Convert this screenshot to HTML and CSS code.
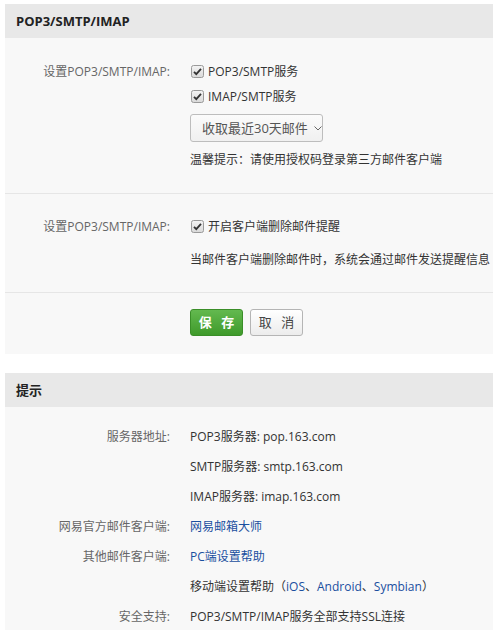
FILE: index.html
```html
<!DOCTYPE html>
<html lang="zh-CN">
<head>
<meta charset="utf-8">
<title>POP3/SMTP/IMAP</title>
<link rel="stylesheet" href="styles.css">
</head>
<body>
<div class="panel">
  <div class="panel-hd">POP3/SMTP/IMAP</div>
  <div class="section s1">
    <div class="row">
      <div class="label">设置POP3/SMTP/IMAP:</div>
      <div class="content">
        <div class="line"><span class="cb"><svg viewBox="0 0 13 13" width="13" height="13"><rect x="0.5" y="0.5" width="12" height="12" rx="2" fill="url(#g)" stroke="#9a9a9a"/><defs><linearGradient id="g" x1="0" y1="0" x2="0" y2="1"><stop offset="0" stop-color="#f4f4f4"/><stop offset="1" stop-color="#d9d9d9"/></linearGradient></defs><path d="M3 6.8 L5.3 9.2 L10 3.8" fill="none" stroke="#333" stroke-width="1.8"/></svg></span>POP3/SMTP服务</div>
        <div class="line"><span class="cb"><svg viewBox="0 0 13 13" width="13" height="13"><rect x="0.5" y="0.5" width="12" height="12" rx="2" fill="url(#g)" stroke="#9a9a9a"/><path d="M3 6.8 L5.3 9.2 L10 3.8" fill="none" stroke="#333" stroke-width="1.8"/></svg></span>IMAP/SMTP服务</div>
        <div class="select">收取最近30天邮件<svg class="chev" viewBox="0 0 8 5" width="8" height="5"><path d="M0.5 0.5 L4 4 L7.5 0.5" fill="none" stroke="#666" stroke-width="1"/></svg></div>
        <div class="hint">温馨提示：请使用授权码登录第三方邮件客户端</div>
      </div>
    </div>
  </div>
  <div class="section s2">
    <div class="row">
      <div class="label">设置POP3/SMTP/IMAP:</div>
      <div class="content">
        <div class="line"><span class="cb"><svg viewBox="0 0 13 13" width="13" height="13"><rect x="0.5" y="0.5" width="12" height="12" rx="2" fill="url(#g)" stroke="#9a9a9a"/><path d="M3 6.8 L5.3 9.2 L10 3.8" fill="none" stroke="#333" stroke-width="1.8"/></svg></span>开启客户端删除邮件提醒</div>
        <div class="desc">当邮件客户端删除邮件时，系统会通过邮件发送提醒信息</div>
      </div>
    </div>
  </div>
  <div class="section s3">
    <div class="row">
      <div class="label"></div>
      <div class="content buttons">
        <span class="btn btn-save">保 存</span>
        <span class="btn btn-cancel">取 消</span>
      </div>
    </div>
  </div>
</div>

<div class="panel">
  <div class="panel-hd">提示</div>
  <div class="section s4">
    <div class="row"><div class="label">服务器地址:</div><div class="content">POP3服务器: pop.163.com</div></div>
    <div class="row"><div class="label"></div><div class="content">SMTP服务器: smtp.163.com</div></div>
    <div class="row"><div class="label"></div><div class="content">IMAP服务器: imap.163.com</div></div>
    <div class="row"><div class="label">网易官方邮件客户端:</div><div class="content"><a class="link">网易邮箱大师</a></div></div>
    <div class="row"><div class="label">其他邮件客户端:</div><div class="content"><a class="link">PC端设置帮助</a></div></div>
    <div class="row"><div class="label"></div><div class="content">移动端设置帮助（<a class="link">iOS</a>、<a class="link">Android</a>、<a class="link">Symbian</a>）</div></div>
    <div class="row"><div class="label">安全支持:</div><div class="content">POP3/SMTP/IMAP服务全部支持SSL连接</div></div>
  </div>
</div>
</body>
</html>
```

FILE: styles.css
```css
html, body {
  margin: 0;
  padding: 0;
  background: #fff;
}
body {
  padding: 4px 0 0 5px;
  font-family: "Open Sans", "Noto Sans CJK SC", sans-serif;
  font-size: 12px;
  color: #333;
}
.panel {
  background: #f8f8f8;
  margin-bottom: 19px;
}
.panel-hd {
  height: 34px;
  line-height: 34px;
  padding-left: 11px;
  background: #e8e8e8;
  font-weight: bold;
  font-size: 13px;
  color: #222;
}
.section {
  border-top: 1px solid #e6e6e6;
}
.panel-hd + .section {
  border-top: none;
}
.row {
  display: grid;
  grid-template-columns: 165px 1fr;
  column-gap: 20px;
}
.label {
  text-align: right;
  color: #666;
  white-space: nowrap;
  line-height: 25px;
}
.content {
  white-space: nowrap;
  line-height: 25px;
}
.line {
  display: flex;
  align-items: center;
  height: 25px;
}
.cb {
  display: inline-flex;
  width: 13px;
  height: 13px;
  margin: 0 4px 0 1px;
}
.s1 {
  padding: 21px 0 23px;
}
.select {
  display: inline-flex;
  align-items: center;
  box-sizing: border-box;
  width: 133px;
  height: 28px;
  margin-top: 5px;
  padding-left: 11px;
  border: 1px solid #bdbdbd;
  border-radius: 3px;
  background: linear-gradient(#fbfbfb, #f0f0f0);
  color: #555;
  font-size: 13px;
}
.chev {
  margin-left: 6px;
}
.hint {
  margin-top: 8px;
  line-height: 20px;
}
.s2 {
  padding: 20px 0 20px;
}
.desc {
  margin-top: 8px;
}
.s3 {
  padding: 16px 0 18px;
}
.buttons {
  display: flex;
  gap: 7px;
}
.btn {
  display: inline-flex;
  align-items: center;
  justify-content: center;
  box-sizing: border-box;
  width: 53px;
  height: 27px;
  border-radius: 3px;
  font-size: 13px;
  letter-spacing: 3px;
  text-indent: 3px;
}
.btn-save {
  background: linear-gradient(#63b94f, #3f9a2b);
  border: 1px solid #3a8e28;
  color: #fff;
  font-weight: bold;
}
.btn-cancel {
  background: linear-gradient(#ffffff, #ececec);
  border: 1px solid #b5b5b5;
  color: #444;
}
.s4 {
  padding: 15px 0 10px;
}
.s4 .label, .s4 .content {
  line-height: 30px;
}
.link {
  color: #1a4f9f;
  text-decoration: none;
}
```
